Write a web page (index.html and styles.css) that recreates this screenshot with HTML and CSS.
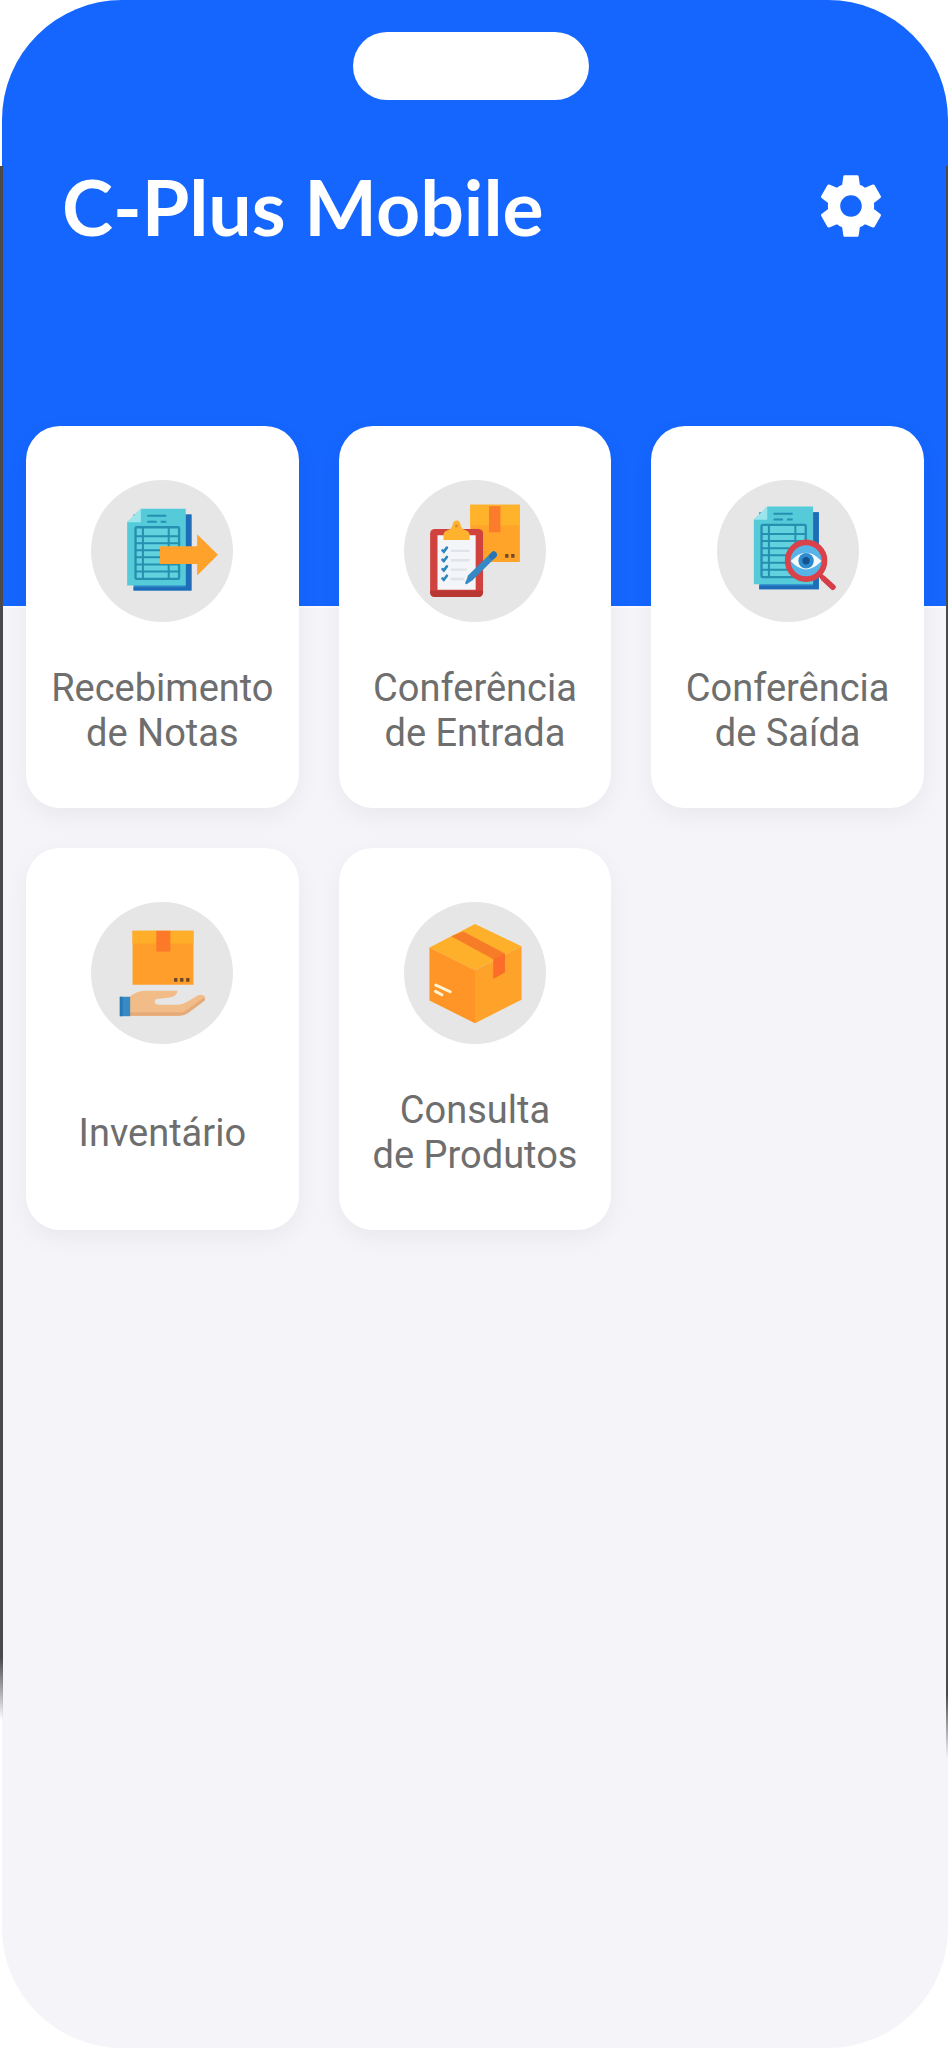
FILE: index.html
```html
<!DOCTYPE html>
<html lang="pt-BR">
<head>
    <meta charset="UTF-8">
    <meta name="viewport" content="width=device-width, initial-scale=1.0">
    <title>C-Plus Mobile</title>
    <link rel="stylesheet" href="styles.css">
</head>
<body>
    <div class="device">
        <div class="screen">
            <!-- Header -->
            <header class="header">
                <div class="notch"></div>
                <div class="title-bar">
                    <h1>C-Plus Mobile</h1>
                    <button type="button" class="settings" aria-label="Configurações">
                        <svg viewBox="0 0 24 24" fill="currentColor"><path d="M19.43 12.98c.04-.32.07-.64.07-.98s-.03-.66-.07-.98l2.11-1.65c.19-.15.24-.42.12-.64l-2-3.46c-.12-.22-.39-.3-.61-.22l-2.49 1c-.52-.4-1.08-.73-1.69-.98l-.38-2.65C14.46 2.18 14.25 2 14 2h-4c-.25 0-.46.18-.49.42l-.38 2.65c-.61.25-1.17.59-1.69.98l-2.49-1c-.23-.09-.49 0-.61.22l-2 3.46c-.13.22-.07.49.12.64l2.11 1.65c-.04.32-.07.65-.07.98s.03.66.07.98l-2.11 1.65c-.19.15-.24.42-.12.64l2 3.46c.12.22.39.3.61.22l2.49-1c.52.4 1.08.73 1.69.98l.38 2.65c.03.24.24.42.49.42h4c.25 0 .46-.18.49-.42l.38-2.65c.61-.25 1.17-.59 1.69-.98l2.49 1c.23.09.49 0 .61-.22l2-3.46c.12-.22.07-.49-.12-.64l-2.11-1.65zM12 15.5c-1.93 0-3.5-1.57-3.5-3.5s1.57-3.5 3.5-3.5 3.5 1.57 3.5 3.5-1.57 3.5-3.5 3.5z"/></svg>
                    </button>
                </div>
            </header>

            <!-- Menu Cards -->
            <main class="menu">
                <a href="#recebimento" class="card">
                    <span class="icon">
                        <svg viewBox="35 32 424 424">
                            <path fill="#2b86c9" d="M162 135h173v227H162z"/>
                            <path fill="#1f6db8" d="M318 135h17v227H162v-10h156z"/>
                            <path fill="#55cbd9" d="M184 118h134v229H143V158z"/>
                            <path fill="#9be6ec" d="M184 118v40h-41z"/>
                            <path stroke="#2590b0" stroke-width="6" d="M203 139h57M203 157h28M243 157h17"/>
                            <rect x="168" y="173" width="130" height="154" rx="4" fill="#62d2df" stroke="#2590b0" stroke-width="7"/>
                            <path stroke="#2590b0" stroke-width="6" d="M168 200h130M168 221h130M168 242h130M168 263h130M168 284h130M168 305h130M190 173v154M267 173v154"/>
                            <path fill="#ffa22b" d="M241 230h111v-36l62 61-62 62v-34H241z"/>
                        </svg>
                    </span>
                    <span class="label">Recebimento<br>de Notas</span>
                </a>
                <a href="#entrada" class="card">
                    <span class="icon">
                        <svg viewBox="30 32 424 424">
                            <path fill="#ffa329" d="M228 106h148v171H228z"/>
                            <path fill="#ffb32a" d="M228 106h148v62H228z"/>
                            <path fill="#fb7c2c" d="M284 110h34v78h-34z"/>
                            <path fill="#6e4b2c" d="M332 253h10v11h-10zM350 253h10v11h-10z"/>
                            <rect x="108" y="178" width="158" height="203" rx="14" fill="#d0423d"/>
                            <path fill="#b93732" d="M108 363h158v4q0 14-14 14H122q-14 0-14-14z"/>
                            <path fill="#f3f5f8" d="M130 197h114v163H130z"/>
                            <path fill="#dfe4ea" d="M170 240h56v7h-56zM170 268h56v7h-56zM170 296h48v7h-48zM170 324h40v7h-40z"/>
                            <path fill="none" stroke="#2f86bb" stroke-width="8" stroke-linecap="round" d="M145 242l4 4 9-12M145 270l4 4 9-12M145 298l4 4 9-12M145 326l4 4 9-12"/>
                            <path fill="#ffb22e" d="M148 211v-14q0-12 12-15 13-4 15-16 2-13 12-13t12 13q2 12 15 16 12 3 12 15v14z"/>
                            <circle cx="187" cy="169" r="5" fill="#d99231"/>
                            <path stroke="#3789c5" stroke-width="19" stroke-linecap="round" d="M298 255l-68 67"/>
                            <path fill="#3789c5" d="M223 315l14 15-20 13q-5 1-4-5z"/>
                            <path stroke="#2876b1" stroke-width="19" stroke-linecap="round" d="M298 255l-5 5"/>
                        </svg>
                    </span>
                    <span class="label">Conferência<br>de Entrada</span>
                </a>
                <a href="#saida" class="card">
                    <span class="icon">
                        <svg viewBox="26 32 424 424">
                            <path fill="#2b86c9" d="M152 128h178v230H152z"/>
                            <path fill="#1f6db8" d="M313 128h17v230H152v-10h161z"/>
                            <path fill="#55cbd9" d="M176 111h137v232H136V151z"/>
                            <path fill="#9be6ec" d="M176 111v40h-40z"/>
                            <path stroke="#2590b0" stroke-width="6" d="M195 133h57M195 150h28M235 150h17"/>
                            <rect x="159" y="166" width="132" height="156" rx="4" fill="#62d2df" stroke="#2590b0" stroke-width="7"/>
                            <path stroke="#2590b0" stroke-width="6" d="M159 193h132M159 214h132M159 236h132M159 257h132M159 279h132M159 300h132M181 166v156M260 166v156"/>
                            <path stroke="#c73b45" stroke-width="13" d="M326 308l20 20"/>
                            <path stroke="#d53e48" stroke-width="17" stroke-linecap="round" d="M344 326l28 26"/>
                            <circle cx="292" cy="273" r="55" fill="#56b4e8" stroke="#d9424a" stroke-width="17"/>
                            <path fill="#f4fbff" d="M246 274q46-50 92 0-46 50-92 0z"/>
                            <circle cx="292" cy="273" r="23" fill="#2e8bce"/>
                            <circle cx="292" cy="273" r="11" fill="#14538f"/>
                        </svg>
                    </span>
                    <span class="label">Conferência<br>de Saída</span>
                </a>
                <a href="#inventario" class="card">
                    <span class="icon">
                        <svg viewBox="34 32 424 424">
                            <path fill="#ff9e2a" d="M158 118h182v161H158z"/>
                            <path fill="#ffae29" d="M158 118h182v38H158z"/>
                            <path fill="#fb7929" d="M229 118h42v62h-42z"/>
                            <path fill="#6f4722" d="M282 259h10v11h-10zM300 259h10v11h-10zM318 259h10v11h-10z"/>
                            <path fill="#f2bc88" d="M150 314q22-17 46-17h96q0 16-22 20l-40 5q-8 3-5 11 3 6 11 6h58q14 0 27-9l32-19q14-6 21 4 3 7-5 13l-46 35q-12 9-26 9H150z"/>
                            <path fill="#e6aa79" d="M150 361h151q12 0 22-9l47-34q10 4-1 12l-46 34q-12 8-26 8H150z"/>
                            <path fill="#368ac5" d="M120 315h31v58h-31z"/>
                            <path fill="#2775b2" d="M120 315h8v58h-8z"/>
                        </svg>
                    </span>
                    <span class="label">Inventário</span>
                </a>
                <a href="#produtos" class="card">
                    <span class="icon">
                        <svg viewBox="29 32 424 424">
                            <path fill="#ffb02a" d="M241 98l139 66-139 72-136-68z"/>
                            <path fill="#ff9527" d="M105 168l136 68v158l-136-68z"/>
                            <path fill="#ffa229" d="M241 236l139-72v160l-139 70z"/>
                            <path fill="#f67c28" d="M170 134l36-14 124 66v56l-34 19v-58z"/>
                            <path fill="#fb6d28" d="M296 203l34-17v56l-34 19z"/>
                            <path stroke="#fff3d2" stroke-width="9" stroke-linecap="round" d="M124 280l43 20M123 299l19 10"/>
                        </svg>
                    </span>
                    <span class="label">Consulta<br>de Produtos</span>
                </a>
            </main>
        </div>
    </div>
</body>
</html>
```
FILE: styles.css
```css
:root {
    --color-primary: #1566ff;
    --color-bg: #f4f4f9;
    --color-card: #ffffff;
    --color-icon-bg: #e6e6e6;
    --color-text: #6e6e6e;
    --color-edge: #4a4a4c;
}

* {
    box-sizing: border-box;
    margin: 0;
    padding: 0;
}

body {
    background: #ffffff;
    font-family: Roboto, sans-serif;
}

/* Device frame */
.device {
    position: relative;
    min-height: 100vh;
    padding-left: 2px;
    display: flex;
}

/* Dark edges on both sides of the screen */
.device::before,
.device::after {
    content: "";
    position: absolute;
    top: 166px;
    width: 3px;
    background: linear-gradient(var(--color-edge) 96%, transparent);
}

.device::before {
    left: 0;
    bottom: 328px;
}

.device::after {
    right: 0;
    bottom: 290px;
    width: 2px;
}

.screen {
    flex: 1;
    background: var(--color-bg);
    border-radius: 120px;
    overflow: hidden;
}

/* Header */
.header {
    display: flex;
    flex-direction: column;
    background: var(--color-primary);
    border-bottom: 2px solid #fbfbff;
    padding: 32px 60px 354px;
}

.notch {
    width: 236px;
    height: 68px;
    margin: 0 auto 60px;
    border-radius: 34px;
    background: #ffffff;
    align-self: center;
    margin-left: 291px;
}

.title-bar {
    display: flex;
    justify-content: space-between;
    align-items: center;
    height: 92px;
}

h1 {
    font-family: Lato, sans-serif;
    font-size: 77px;
    line-height: 92px;
    font-weight: bold;
    color: #ffffff;
}

.settings {
    width: 74px;
    height: 74px;
    border: none;
    background: none;
    color: #ffffff;
    cursor: pointer;
}

.settings svg {
    display: block;
}

/* Menu Cards */
.menu {
    display: grid;
    grid-template-columns: repeat(3, 1fr);
    gap: 40px;
    margin-top: -182px;
    padding: 0 24px;
}

.card {
    display: flex;
    flex-direction: column;
    align-items: center;
    padding: 54px 8px 8px;
    border-radius: 34px;
    background: var(--color-card);
    box-shadow: 0 8px 24px rgba(0, 0, 0, 0.05);
    color: var(--color-text);
    text-decoration: none;
}

.icon {
    width: 142px;
    height: 142px;
    border-radius: 50%;
    background: var(--color-icon-bg);
}

.icon svg {
    display: block;
    fill: none;
}

.label {
    display: flex;
    align-items: center;
    min-height: 178px;
    font-size: 38px;
    line-height: 45px;
    text-align: center;
}
```
